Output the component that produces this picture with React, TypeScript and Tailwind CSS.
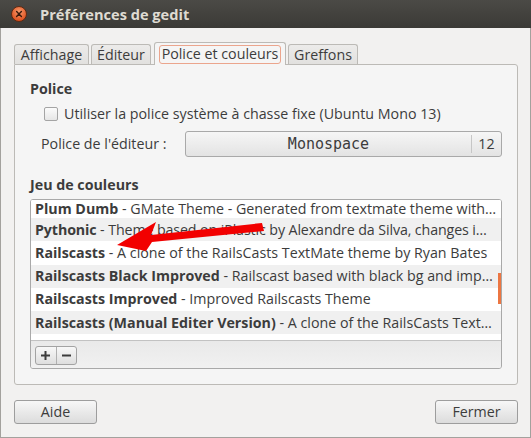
import React from "react";

const rows: { name: string; desc: string; tight?: boolean }[] = [
  { name: "Plum Dumb", desc: "GMate Theme - Generated from textmate theme with…" },
  { name: "Pythonic", desc: "Theme based on iPlastic by Alexandre da Silva, changes i…", tight: true },
  { name: "Railscasts", desc: "A clone of the RailsCasts TextMate theme by Ryan Bates" },
  { name: "Railscasts Black Improved", desc: "Railscast based with black bg and imp…" },
  { name: "Railscasts Improved", desc: "Improved Railscasts Theme" },
  { name: "Railscasts (Manual Editer Version)", desc: "A clone of the RailsCasts Text…" },
  { name: "Slate", desc: "A dark theme based on the Slate theme" },
];

export default function App() {
  return (
    <div className="relative w-[531px] h-[438px] flex flex-col bg-[#f2f1f0] text-[#3c3c3c] overflow-hidden font-['Open_Sans','Noto_Sans',sans-serif] text-[14.25px] leading-[18px]">
      {/* Title bar */}
      <div className="h-[28px] shrink-0 flex items-center bg-linear-to-b from-[#4b4a46] to-[#3b3a36]">
        <svg width="18" height="18" viewBox="0 0 18 18" className="ml-[10px]">
          <defs>
            <radialGradient id="cg" cx="50%" cy="35%" r="65%">
              <stop offset="0%" stopColor="#f79a6c" />
              <stop offset="100%" stopColor="#dc4a18" />
            </radialGradient>
          </defs>
          <circle cx="9" cy="9" r="7.5" fill="url(#cg)" stroke="#5a2a14" strokeWidth="1" />
          <path d="M6.6 6.6 L11.4 11.4 M11.4 6.6 L6.6 11.4" stroke="#3a1a0c" strokeWidth="1.4" strokeLinecap="round" />
        </svg>
        <span className="ml-[12px] font-bold text-[14.6px] text-[#dfdbd2]">Préférences de gedit</span>
      </div>

      {/* Body */}
      <div className="flex-1 flex flex-col border-x border-b border-[#a3a19d] pl-[13px] pr-[12px]">
        {/* Tabs */}
        <div className="mt-[14px] h-[22px] flex items-end relative z-10">
          <div className="w-[75px] h-[20px] border border-b-0 border-[#bcbab6] rounded-t-[3px] bg-linear-to-b from-[#ecebea] to-[#e2e1df] flex items-center justify-center">
            Affichage
          </div>
          <div className="ml-[2px] w-[60px] h-[20px] border border-b-0 border-[#bcbab6] rounded-t-[3px] bg-linear-to-b from-[#ecebea] to-[#e2e1df] flex items-center justify-center">
            Éditeur
          </div>
          <div className="ml-[3px] w-[132px] h-[23px] -mb-[1px] border border-b-0 border-[#bcbab6] rounded-t-[3px] bg-[#f5f5f5] flex items-center justify-center">
            <span className="px-[2px] h-[19px] flex items-center border border-[#eba58d] rounded-[3px]">Police et couleurs</span>
          </div>
          <div className="ml-[2px] w-[70px] h-[20px] border border-b-0 border-[#bcbab6] rounded-t-[3px] bg-linear-to-b from-[#ecebea] to-[#e2e1df] flex items-center justify-center">
            Greffons
          </div>
        </div>

        {/* Notebook page */}
        <div className="h-[321px] border border-[#bcbab6] rounded-b-[3px] rounded-tr-[3px] bg-[#f5f5f5] px-[15px] pt-[15px] flex flex-col">
          <div className="font-bold">Police</div>
          <div className="mt-[7px] ml-[14px] flex items-center">
            <span className="w-[14px] h-[14px] rounded-[2px] border border-[#a4a4a4] bg-linear-to-b from-[#fbfbfb] to-[#e6e6e6]" />
            <span className="ml-[6px]">Utiliser la police système à chasse fixe (Ubuntu Mono 13)</span>
          </div>
          <div className="mt-[8px] ml-[11px] flex items-center">
            <span className="w-[144px] shrink-0">Police de l'éditeur :</span>
            <div className="flex-1 h-[26px] flex items-center border border-[#a9a9a9] rounded-[3px] bg-linear-to-b from-[#f6f6f6] to-[#e3e3e3]">
              <span className="flex-1 text-center font-['DejaVu_Sans_Mono',monospace] text-[15px]">Monospace</span>
              <span className="w-[1px] h-[18px] bg-[#c6c6c6]" />
              <span className="w-[29px] text-center">12</span>
            </div>
          </div>
          <div className="mt-[19px] font-bold">Jeu de couleurs</div>
          <div className="mt-[5px] h-[170px] border border-[#a9a9a9] rounded-[3px] overflow-hidden flex flex-col bg-[#efefef]">
            <div className="relative h-[140px] bg-white overflow-hidden">
              {rows.map((r, i) => (
                <div
                  key={r.name}
                  className={`${i === 0 ? "h-[18.2px]" : "h-[23.2px]"} pl-[4px] flex items-center whitespace-nowrap ${i % 2 === 1 ? "bg-[#f0f0f0]" : "bg-white"} ${r.tight ? "tracking-[-0.12px]" : ""}`}
                >
                  <span>
                    <span className="font-bold">{r.name}</span> - {r.desc}
                  </span>
                </div>
              ))}
              <div className="absolute right-0 top-[73px] w-[3px] h-[31px] bg-[#ec7642]" />
            </div>
            <div className="flex-1 border-t border-[#c2c2c2] bg-linear-to-b from-[#e9e9e9] to-[#f1f1f1] pl-[4px] pt-[5px]">
              <div className="flex h-[19px] w-[42px] border border-[#a3a3a3] rounded-[3px] bg-linear-to-b from-[#f8f8f8] to-[#dedede]">
                <div className="flex-1 flex items-center justify-center border-r border-[#b0b0b0]">
                  <svg width="11" height="11" viewBox="0 0 11 11">
                    <path d="M5.5 1 V10 M1 5.5 H10" stroke="#3c3c3c" strokeWidth="2" />
                  </svg>
                </div>
                <div className="flex-1 flex items-center justify-center">
                  <svg width="11" height="11" viewBox="0 0 11 11">
                    <path d="M1 5.5 H10" stroke="#3c3c3c" strokeWidth="2" />
                  </svg>
                </div>
              </div>
            </div>
          </div>
        </div>

        {/* Buttons */}
        <div className="mt-[15px] flex justify-between">
          <button className="w-[83px] h-[24px] border border-[#9d9d9d] rounded-[3px] bg-linear-to-b from-[#f7f7f7] to-[#dcdcdc] text-[#3c3c3c]">
            Aide
          </button>
          <button className="w-[83px] h-[24px] border border-[#9d9d9d] rounded-[3px] bg-linear-to-b from-[#f7f7f7] to-[#dcdcdc] text-[#3c3c3c]">
            Fermer
          </button>
        </div>
      </div>

      {/* Red annotation arrow */}
      <svg className="absolute left-0 top-0 pointer-events-none" width="531" height="438" viewBox="0 0 531 438">
        <polygon
          points="117,245 156,222 151,235 262,223 264,231 152,242 146,251"
          fill="#f20000"
          strokeLinejoin="round"
        />
      </svg>
    </div>
  );
}
